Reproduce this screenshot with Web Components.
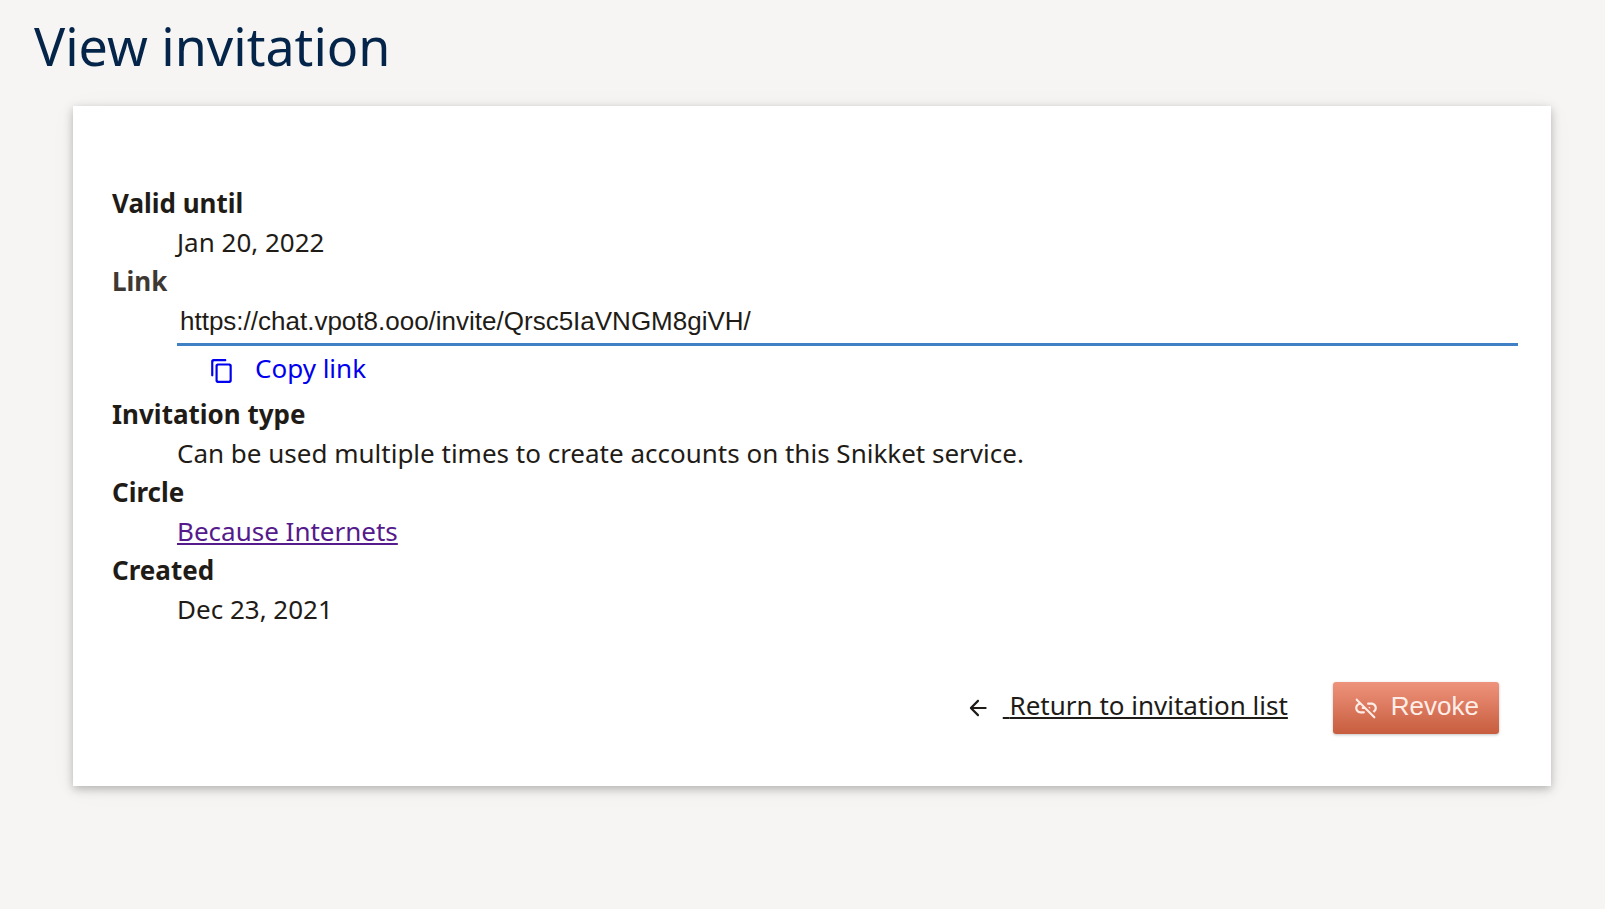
<!DOCTYPE html>
<html lang="en">
<head>
<meta charset="utf-8">
<meta name="viewport" content="width=device-width, initial-scale=1">
<title>View invitation</title>
<style>
  body {
    margin: 0;
    min-height: 100vh;
    background: #f6f5f3;
    color: #1f1c17;
    font: 26px/39px "Noto Sans", sans-serif;
    --accent: #4080c5;
    --heading: #042549;
    --label: #3e3833;
  }
</style>
</head>
<body>
<invitation-page heading="View invitation">
  <invitation-details></invitation-details>
  <action-bar>
    <return-link href="#invitations">Return to invitation list</return-link>
    <danger-button>Revoke</danger-button>
  </action-bar>
</invitation-page>

<script>
const define = (name, html, setup) => {
  const template = document.createElement('template');
  template.innerHTML = html;
  customElements.define(name, class extends HTMLElement {
    constructor() {
      super();
      this.attachShadow({ mode: 'open' }).append(template.content.cloneNode(true));
    }
    connectedCallback() {
      if (setup) setup(this, this.shadowRoot);
    }
  });
};

const icons = {
  copy: 'M15 1H4c-1.1 0-2 .9-2 2v13c0 .55.45 1 1 1s1-.45 1-1V4c0-.55.45-1 1-1h10c.55 0 1-.45 1-1s-.45-1-1-1zm4 4H8c-1.1 0-2 .9-2 2v14c0 1.1.9 2 2 2h11c1.1 0 2-.9 2-2V7c0-1.1-.9-2-2-2zm-1 16H9c-.55 0-1-.45-1-1V8c0-.55.45-1 1-1h9c.55 0 1 .45 1 1v12c0 .55-.45 1-1 1z',
  back: 'M19 11H7.83l4.88-4.88c.39-.39.39-1.03 0-1.42-.39-.39-1.02-.39-1.41 0l-6.59 6.59c-.39.39-.39 1.02 0 1.41l6.59 6.59c.39.39 1.02.39 1.41 0 .39-.39.39-1.02 0-1.41L7.83 13H19c.55 0 1-.45 1-1s-.45-1-1-1z',
  unlink: 'M17 7h-3c-.55 0-1 .45-1 1s.45 1 1 1h3c1.65 0 3 1.35 3 3 0 1.27-.8 2.36-1.93 2.8l1.5 1.5C21.03 15.45 22 13.85 22 12c0-2.76-2.24-5-5-5zM2.71 3.58c-.39.39-.39 1.02 0 1.41l2.4 2.4C3.29 8.12 2 9.91 2 12c0 2.76 2.24 5 5 5h3c.55 0 1-.45 1-1s-.45-1-1-1H7c-1.65 0-3-1.35-3-3 0-1.59 1.24-2.9 2.82-2.99L8.9 11.1c-.5.1-.9.46-.9.9 0 .55.45 1 1 1h1.73l8.28 8.29c.39.39 1.02.39 1.41 0s.39-1.02 0-1.41L4.12 3.58c-.39-.39-1.02-.39-1.41 0zM14 11l1.71 1.71c.2-.18.29-.43.29-.71 0-.55-.45-1-1-1z'
};

define('ui-icon', `
  <style>
    :host { display: inline-block; width: 26px; height: 26px; vertical-align: middle; }
    svg { display: block; width: 100%; height: 100%; fill: currentColor; }
  </style>
  <svg viewBox="0 0 24 24" aria-hidden="true"><path/></svg>
`, (el, root) => root.querySelector('path').setAttribute('d', icons[el.getAttribute('name')]));

define('invitation-page', `
  <style>
    :host { display: block; padding: 7px 54px 39px 34px; }
    h1 { margin: 0; color: var(--heading); font-size: 52px; line-height: 78px; font-weight: 400; }
    main {
      margin: 21px 0 0 39px;
      padding: 39px;
      background: #fff;
      box-shadow: 0 3px 9px rgba(0, 0, 0, .26), 0 3px 26px rgba(0, 0, 0, .04);
    }
  </style>
  <h1></h1>
  <main><slot></slot></main>
`, (el, root) => { root.querySelector('h1').textContent = el.getAttribute('heading'); });

define('invitation-details', `
  <style>
    :host { display: block; }
    dl { margin: 39px 0 40px; }
    dt { font-weight: 700; }
    dd { margin: 0 0 0 65px; }
    label { color: var(--label); }
    input {
      display: block;
      box-sizing: content-box;
      width: 100%;
      height: 36px;
      margin: 0;
      padding: 2px 3px 4px;
      border: 0;
      border-bottom: 3px solid var(--accent);
      background: none;
      color: inherit;
      font: 26px "Liberation Sans", Arial, sans-serif;
      outline: 0;
    }
    button {
      display: block;
      margin: 3px 0 7px;
      padding: 0 32px;
      border: 0;
      background: none;
      color: #0000ee;
      font: inherit;
      cursor: pointer;
    }
    ui-icon { margin-right: 20px; }
    a { color: #551a8b; }
  </style>
  <dl>
    <dt>Valid until</dt>
    <dd>Jan 20, 2022</dd>
    <dt><label for="link">Link</label></dt>
    <dd>
      <input id="link" type="text" readonly value="https://chat.vpot8.ooo/invite/Qrsc5IaVNGM8giVH/">
      <button type="button"><ui-icon name="copy"></ui-icon>Copy link</button>
    </dd>
    <dt>Invitation type</dt>
    <dd>Can be used multiple times to create accounts on this Snikket service.</dd>
    <dt>Circle</dt>
    <dd><a href="#circle">Because Internets</a></dd>
    <dt>Created</dt>
    <dd>Dec 23, 2021</dd>
  </dl>
`);

define('action-bar', `
  <style>
    :host { display: flex; flex-wrap: wrap; justify-content: flex-end; align-items: baseline; gap: 13px 45px; padding: 13px; }
  </style>
  <slot></slot>
`);

define('return-link', `
  <style>
    :host { display: block; }
    a { color: inherit; text-decoration: none; }
    ui-icon { margin-right: 12px; }
    span { text-decoration: underline; }
  </style>
  <a><ui-icon name="back"></ui-icon><span>&nbsp;<slot></slot></span></a>
`, (el, root) => { root.querySelector('a').href = el.getAttribute('href'); });

define('danger-button', `
  <style>
    :host { display: block; }
    button {
      display: block;
      height: 52px;
      padding: 0 20px 4px;
      border: 0;
      border-radius: 3px;
      background: linear-gradient(#ee937c, #c75d3e);
      box-shadow: 0 1px 3px rgba(0, 0, 0, .24);
      color: #ffeee8;
      font: 26px/39px "Liberation Sans", Arial, sans-serif;
      cursor: pointer;
    }
    ui-icon { margin-right: 12px; }
  </style>
  <button type="button"><ui-icon name="unlink"></ui-icon><slot></slot></button>
`);
</script>
</body>
</html>
